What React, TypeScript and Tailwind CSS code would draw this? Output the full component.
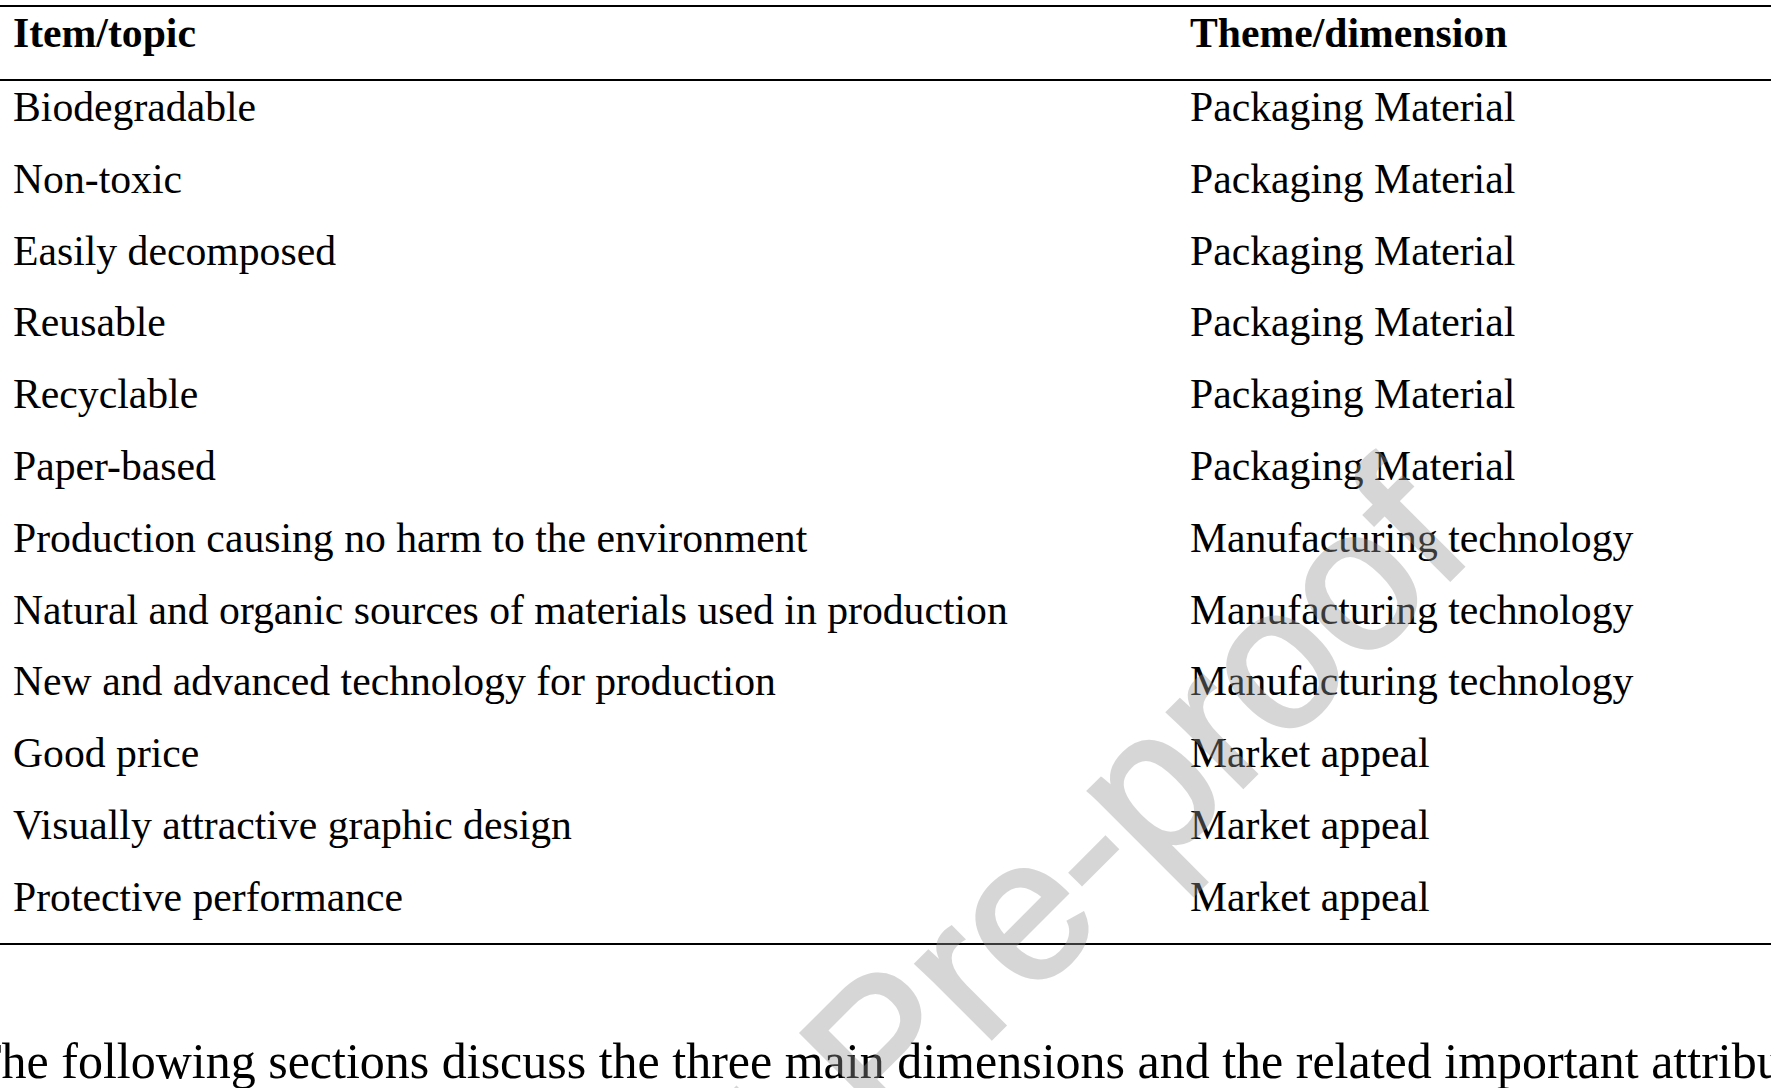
import React from "react";

const rows: [string, string][] = [
  ["Biodegradable", "Packaging Material"],
  ["Non-toxic", "Packaging Material"],
  ["Easily decomposed", "Packaging Material"],
  ["Reusable", "Packaging Material"],
  ["Recyclable", "Packaging Material"],
  ["Paper-based", "Packaging Material"],
  ["Production causing no harm to the environment", "Manufacturing technology"],
  ["Natural and organic sources of materials used in production", "Manufacturing technology"],
  ["New and advanced technology for production", "Manufacturing technology"],
  ["Good price", "Market appeal"],
  ["Visually attractive graphic design", "Market appeal"],
  ["Protective performance", "Market appeal"],
];

export default function App() {
  return (
    <div
      className="relative w-[1771px] h-[1088px] overflow-hidden bg-white text-black"
      style={{ fontFamily: '"Liberation Serif", "Times New Roman", serif' }}
    >
      <div className="pt-[5px]">
        <div className="border-t-2 border-b-2 border-black">
          <div className="grid grid-cols-[1177px_1fr] h-[72px] text-[41.7px] leading-[52px] font-bold">
            <div className="pl-[13px]">Item/topic</div>
            <div className="pl-[13px]">Theme/dimension</div>
          </div>
        </div>
        <div className="border-b-2 border-black">
          {rows.map(([a, b], i) => (
            <div
              key={i}
              className="grid grid-cols-[1177px_1fr] h-[71.8px] text-[41.7px] leading-[53px] whitespace-nowrap"
            >
              <div className="pl-[13px]">{a}</div>
              <div className="pl-[13px]">{b}</div>
            </div>
          ))}
        </div>
        <p className="mt-[86px] -ml-[29px] whitespace-nowrap text-[50px] leading-[60px]">
          The following sections discuss the three main dimensions and the related important attributes
        </p>
      </div>

      <div
        className="pointer-events-none absolute left-[882px] top-[1050px] -translate-x-1/2 -translate-y-1/2 rotate-[-45deg] whitespace-nowrap text-[200px] leading-none text-[rgb(150,150,150)] opacity-[0.38] [-webkit-text-stroke:4px_rgb(150,150,150)]"
        style={{ fontFamily: '"Liberation Sans", Arial, sans-serif' }}
      >
        Journal Pre-proof
      </div>
    </div>
  );
}
